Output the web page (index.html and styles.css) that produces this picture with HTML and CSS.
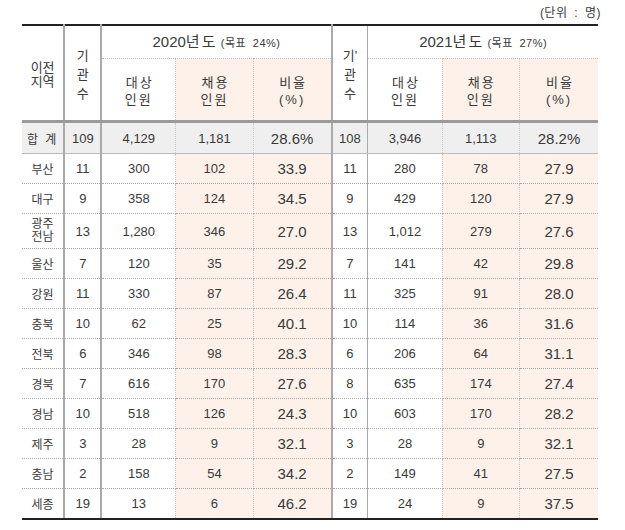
FILE: index.html
```html
<!DOCTYPE html>
<html lang="ko">
<head>
<meta charset="utf-8">
<link rel="stylesheet" href="styles.css">
</head>
<body>
<div class="wrap">
  <div class="unit">(단위 : 명)</div>
  <table class="tbl">
    <colgroup>
      <col class="c-region"><col class="c-cnt"><col class="c-a"><col class="c-b"><col class="c-c">
      <col class="c-cnt2"><col class="c-a"><col class="c-b"><col class="c-c">
    </colgroup>
    <thead>
      <tr class="h1">
        <th rowspan="2" class="region vl">이전<br>지역</th>
        <th rowspan="2" class="cnt vl vert">기<br>관<br>수</th>
        <th colspan="3" class="year vl">2020년 도 <small>(목표 24%)</small></th>
        <th rowspan="2" class="cnt vl1 vert">기'<br>관<br>수</th>
        <th colspan="3" class="year">2021년 도 <small>(목표 27%)</small></th>
      </tr>
      <tr class="h2">
        <th class="dl">대상<br>인원</th>
        <th class="pe dl">채용<br>인원</th>
        <th class="pe vl">비율<br>(%)</th>
        <th class="dl">대상<br>인원</th>
        <th class="pe dl">채용<br>인원</th>
        <th class="pe">비율<br>(%)</th>
      </tr>
    </thead>
    <tbody>
      <tr class="total">
        <td class="region vl">합 계</td><td class="vl">109</td><td class="dl">4,129</td><td class="dl">1,181</td><td class="vl r">28.6%</td>
        <td class="vl1">108</td><td class="dl">3,946</td><td class="dl">1,113</td><td class="r">28.2%</td>
      </tr>
      <tr>
        <td class="region vl">부산</td><td class="vl">11</td><td class="dl">300</td><td class="pe dl">102</td><td class="pe vl r">33.9</td>
        <td class="vl1">11</td><td class="dl">280</td><td class="pe dl">78</td><td class="pe r">27.9</td>
      </tr>
      <tr>
        <td class="region vl">대구</td><td class="vl">9</td><td class="dl">358</td><td class="pe dl">124</td><td class="pe vl r">34.5</td>
        <td class="vl1">9</td><td class="dl">429</td><td class="pe dl">120</td><td class="pe r">27.9</td>
      </tr>
      <tr class="tall">
        <td class="region vl small">광주<br>전남</td><td class="vl">13</td><td class="dl">1,280</td><td class="pe dl">346</td><td class="pe vl r">27.0</td>
        <td class="vl1">13</td><td class="dl">1,012</td><td class="pe dl">279</td><td class="pe r">27.6</td>
      </tr>
      <tr>
        <td class="region vl">울산</td><td class="vl">7</td><td class="dl">120</td><td class="pe dl">35</td><td class="pe vl r">29.2</td>
        <td class="vl1">7</td><td class="dl">141</td><td class="pe dl">42</td><td class="pe r">29.8</td>
      </tr>
      <tr>
        <td class="region vl">강원</td><td class="vl">11</td><td class="dl">330</td><td class="pe dl">87</td><td class="pe vl r">26.4</td>
        <td class="vl1">11</td><td class="dl">325</td><td class="pe dl">91</td><td class="pe r">28.0</td>
      </tr>
      <tr>
        <td class="region vl">충북</td><td class="vl">10</td><td class="dl">62</td><td class="pe dl">25</td><td class="pe vl r">40.1</td>
        <td class="vl1">10</td><td class="dl">114</td><td class="pe dl">36</td><td class="pe r">31.6</td>
      </tr>
      <tr>
        <td class="region vl">전북</td><td class="vl">6</td><td class="dl">346</td><td class="pe dl">98</td><td class="pe vl r">28.3</td>
        <td class="vl1">6</td><td class="dl">206</td><td class="pe dl">64</td><td class="pe r">31.1</td>
      </tr>
      <tr>
        <td class="region vl">경북</td><td class="vl">7</td><td class="dl">616</td><td class="pe dl">170</td><td class="pe vl r">27.6</td>
        <td class="vl1">8</td><td class="dl">635</td><td class="pe dl">174</td><td class="pe r">27.4</td>
      </tr>
      <tr>
        <td class="region vl">경남</td><td class="vl">10</td><td class="dl">518</td><td class="pe dl">126</td><td class="pe vl r">24.3</td>
        <td class="vl1">10</td><td class="dl">603</td><td class="pe dl">170</td><td class="pe r">28.2</td>
      </tr>
      <tr>
        <td class="region vl">제주</td><td class="vl">3</td><td class="dl">28</td><td class="pe dl">9</td><td class="pe vl r">32.1</td>
        <td class="vl1">3</td><td class="dl">28</td><td class="pe dl">9</td><td class="pe r">32.1</td>
      </tr>
      <tr>
        <td class="region vl">충남</td><td class="vl">2</td><td class="dl">158</td><td class="pe dl">54</td><td class="pe vl r">34.2</td>
        <td class="vl1">2</td><td class="dl">149</td><td class="pe dl">41</td><td class="pe r">27.5</td>
      </tr>
      <tr class="last">
        <td class="region vl">세종</td><td class="vl">19</td><td class="dl">13</td><td class="pe dl">6</td><td class="pe vl r">46.2</td>
        <td class="vl1">19</td><td class="dl">24</td><td class="pe dl">9</td><td class="pe r">37.5</td>
      </tr>
    </tbody>
  </table>
</div>
</body>
</html>
```
FILE: styles.css
```css
html, body {
  margin: 0;
  padding: 0;
  background: #fff;
}
body {
  font-family: "Liberation Sans", "Noto Sans CJK KR", sans-serif;
  color: #3a3a3a;
}
.wrap {
  width: 576px;
  padding: 6px 0 0 22px;
}
.unit {
  text-align: right;
  font-size: 12px;
  line-height: 14px;
  height: 18px;
  margin-right: -3px;
  word-spacing: 3px;
  letter-spacing: 0.5px;
}
.tbl {
  width: 576px;
  table-layout: fixed;
  border-collapse: collapse;
  border-top: 2px solid #222;
  border-bottom: 2px solid #222;
}
.c-region { width: 42px; }
.c-cnt { width: 37px; }
.c-cnt2 { width: 36px; }
.c-a { width: 74px; }
.c-b { width: 77px; }
.c-c { width: 78px; }

th, td {
  padding: 0;
  text-align: center;
  vertical-align: middle;
  font-weight: normal;
}
th {
  font-size: 13px;
  line-height: 17px;
  letter-spacing: 2px;
  text-indent: 2px;
}
.h1 th { height: 32px; border-bottom: 1px dotted #bbb; }
.h1 th.region, .h1 th.cnt { border-bottom: 3px solid #9a9a9a; }
.h2 th { height: 59px; border-bottom: 3px solid #9a9a9a; padding-top: 2px; }
th.region { line-height: 14px; letter-spacing: 0; text-indent: 0; padding-top: 4px; }
th.vert { line-height: 19px; padding-top: 2px; letter-spacing: 0; text-indent: 0; }
th.year { font-size: 15px; letter-spacing: 0; text-indent: 0; word-spacing: -2px; }
th.year small { font-size: 11px; letter-spacing: 0.5px; margin-left: 3px; word-spacing: 3px; }

td {
  height: 29px;
  font-size: 13px;
  border-bottom: 1px dotted #aaa;
}
td.r { font-size: 15px; }
td.region { font-size: 12px; }
td.small { font-size: 12px; line-height: 13px; }
tr.tall td { height: 34px; }
tr.total td { background: #efefef; height: 30px; border-bottom: 1px solid #bbb; }
tr.total td.region { letter-spacing: 2px; }
tr.last td { border-bottom: 2px solid #222; }

.pe { background: #fdf1e9; }
.vl { border-right: 2px solid #aaa; }
.vl1 { border-right: 1px solid #aaa; }
.dl { border-right: 1px dotted #c8c8c8; }
```
